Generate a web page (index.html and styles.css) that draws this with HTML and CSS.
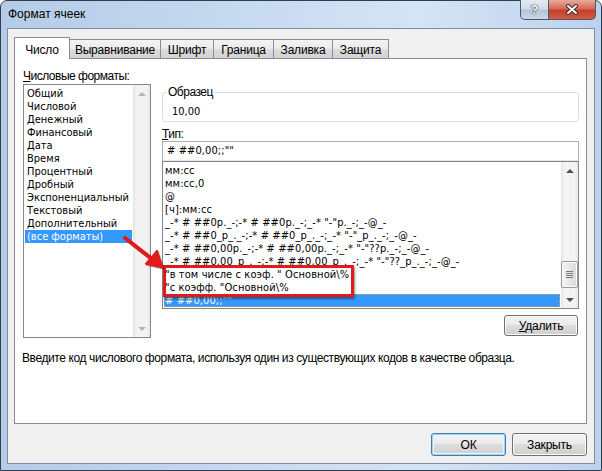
FILE: index.html
```html
<!DOCTYPE html>
<html lang="ru">
<head>
    <meta charset="UTF-8">
    <title>Формат ячеек</title>
    <link rel="stylesheet" href="styles.css">
</head>
<body>
    <div class="window">
        <div class="titlebar">
            <span class="title">Формат ячеек</span>
            <div class="caption-btns">
                <div class="cap-help">?</div>
                <div class="cap-close">
                    <svg width="14" height="11" viewBox="0 0 14 11">
                        <path d="M3 2 L11 9 M11 2 L3 9" stroke="#3b2b2b" stroke-width="4" stroke-linecap="round"/>
                        <path d="M3 2 L11 9 M11 2 L3 9" stroke="#fff" stroke-width="2" stroke-linecap="round"/>
                    </svg>
                </div>
            </div>
        </div>

        <div class="client">
            <div class="tabs">
                <div class="tab active w1">Число</div>
                <div class="tab w2">Выравнивание</div>
                <div class="tab w3">Шрифт</div>
                <div class="tab w4">Граница</div>
                <div class="tab w5">Заливка</div>
                <div class="tab w6">Защита</div>
            </div>

            <div class="panel">
                <div class="panel-main">
                    <div class="col-left">
                        <div class="label"><u>Ч</u>исловые форматы:</div>
                        <div class="listbox cat-list">
                            <ul class="items">
                                <li>Общий</li>
                                <li>Числовой</li>
                                <li>Денежный</li>
                                <li>Финансовый</li>
                                <li>Дата</li>
                                <li>Время</li>
                                <li>Процентный</li>
                                <li>Дробный</li>
                                <li>Экспоненциальный</li>
                                <li>Текстовый</li>
                                <li>Дополнительный</li>
                                <li class="selected">(все форматы)</li>
                            </ul>
                            <div class="vscroll disabled">
                                <div class="sb-btn"><span class="arr-up"></span></div>
                                <div class="sb-track"></div>
                                <div class="sb-btn"><span class="arr-down"></span></div>
                            </div>
                        </div>
                    </div>

                    <div class="col-right">
                        <fieldset class="sample">
                            <legend>Образец</legend>
                            <div class="sample-val">10,00</div>
                        </fieldset>

                        <div class="label type-label"><u>Т</u>ип:</div>
                        <div class="textbox"># ##0,00;;""</div>

                        <div class="listbox type-list">
                            <ul class="items">
                                <li>мм:сс</li>
                                <li>мм:сс,0</li>
                                <li>@</li>
                                <li>[ч]:мм:сс</li>
                                <li>_-* # ##0р._-;-* # ##0р._-;_-* "-"р._-;_-@_-</li>
                                <li>_-* # ##0_р_._-;-* # ##0_р_._-;_-* "-"_р_._-;_-@_-</li>
                                <li>_-* # ##0,00р._-;-* # ##0,00р._-;_-* "-"??р._-;_-@_-</li>
                                <li>_-* # ##0,00_р_._-;-* # ##0,00_р_._-;_-* "-"??_р_._-;_-@_-</li>
                                <li>"в том числе с коэф. " Основной\%</li>
                                <li>"с коэфф. "Основной\%</li>
                                <li class="selected focus"># ##0,00;;""</li>
                            </ul>
                            <div class="vscroll">
                                <div class="sb-btn"><span class="arr-up"></span></div>
                                <div class="sb-track">
                                    <div class="sb-thumb"><span></span><span></span><span></span><span></span></div>
                                </div>
                                <div class="sb-btn"><span class="arr-down"></span></div>
                            </div>
                        </div>

                        <div class="row-right">
                            <button class="btn"><u>У</u>далить</button>
                        </div>
                    </div>
                </div>

                <p class="hint">Введите код числового формата, используя один из существующих кодов в качестве образца.</p>
            </div>

            <div class="dlg-buttons">
                <button class="btn btn-default">ОК</button>
                <button class="btn">Закрыть</button>
            </div>
        </div>
    </div>

    <!-- пометки поверх скриншота -->
    <div class="overlay">
        <div class="callout"></div>
        <svg class="arrow" width="602" height="471" viewBox="0 0 602 471">
            <g transform="translate(1.2 1.2)" fill="rgba(60,0,0,0.35)" stroke="rgba(60,0,0,0.35)">
                <line x1="125" y1="238" x2="152" y2="259" stroke-width="4"/>
                <polygon points="163,268 145,264 157,250"/>
            </g>
            <g fill="#e3191b" stroke="#e3191b">
                <line x1="125" y1="238" x2="152" y2="259" stroke-width="4" stroke-linecap="round"/>
                <polygon points="163,268 145,264 157,250"/>
            </g>
        </svg>
    </div>
</body>
</html>
```

FILE: styles.css
```css
* {
    margin: 0;
    padding: 0;
    box-sizing: border-box;
}

body {
    width: 602px;
    height: 471px;
    overflow: hidden;
    font-family: "Liberation Sans", Arial, sans-serif;
    font-size: 12px;
    color: #000;
    background: #fff;
}

/* Окно */
.window {
    width: 602px;
    height: 471px;
    display: flex;
    flex-direction: column;
    border: 1px solid #2f3d4f;
    border-radius: 7px 7px 0 0;
    background: linear-gradient(to right, #b4cce8 0%, #c6daf0 40%, #d5e4f5 70%, #bcd2ec 100%);
    padding: 0 6px 6px;
}

.titlebar {
    height: 27px;
    display: flex;
    align-items: flex-start;
}

.title {
    line-height: 27px;
    padding-left: 1px;
}

.caption-btns {
    margin-left: auto;
    margin-right: -1px;
    margin-top: -1px;
    display: flex;
}

.cap-help,
.cap-close {
    height: 20px;
    border: 1px solid #4b5a6e;
    border-top: none;
    display: flex;
    align-items: center;
    justify-content: center;
}

.cap-help {
    width: 28px;
    border-right: none;
    border-radius: 0 0 0 5px;
    background: linear-gradient(#e3ebf4 0%, #cfdbe8 48%, #b3c4d8 52%, #c9d8e9 100%);
    color: #fff;
    font-weight: bold;
    font-size: 13px;
    text-shadow: 0 0 1px #2d3846, 0 0 1px #2d3846, 0 0 1px #2d3846;
}

.cap-close {
    width: 48px;
    border-radius: 0 0 5px 0;
    background: linear-gradient(#e9aa9d 0%, #d76a55 45%, #c3402a 55%, #d65a41 100%);
}

.client {
    flex: 1;
    background: #f0f0f0;
    border: 1px solid #7d8da2;
    padding: 8px 7px 0 6px;
    display: flex;
    flex-direction: column;
    letter-spacing: -0.5px;
}

/* Вкладки */
.tabs {
    display: flex;
    height: 21px;
    align-items: flex-start;
    letter-spacing: -0.2px;
}

.tab {
    height: 19px;
    margin-top: 2px;
    margin-left: -1px;
    padding-top: 3px;
    line-height: 14px;
    text-align: center;
    border: 1px solid #898c95;
    border-bottom: none;
    background: linear-gradient(#f3f3f3 0%, #ebebeb 50%, #dddddd 50%, #d2d2d2 100%);
}

.tab.active {
    position: relative;
    z-index: 1;
    height: 22px;
    margin-top: 0;
    padding-top: 5px;
    background: #fff;
}

.w1 { width: 56px; margin-left: 0; }
.w2 { width: 92px; }
.w3 { width: 54px; }
.w4 { width: 61px; }
.w5 { width: 60px; }
.w6 { width: 57px; }

.panel {
    height: 366px;
    background: #fff;
    border: 1px solid #898c95;
    padding: 10px 7px 0 8px;
}

.panel-main {
    display: flex;
    gap: 11px;
}

.label {
    line-height: 14px;
    margin-bottom: 1px;
}

.col-left {
    width: 128px;
}

.col-right {
    width: 417px;
    padding-top: 16px;
}

/* Списки */
.listbox {
    border: 1px solid #828790;
    background: #fff;
    display: flex;
    overflow: hidden;
}

.cat-list {
    height: 254px;
}

.type-list {
    height: 148px;
}

.items {
    list-style: none;
    flex: 1;
    padding: 2px 1px 1px;
    overflow: hidden;
    font-family: "DejaVu Sans Condensed", "DejaVu Sans", sans-serif;
    font-stretch: condensed;
    font-size: 11px;
    letter-spacing: 0;
}

.type-list .items {
    letter-spacing: 0.1px;
}

.items li {
    line-height: 13px;
    height: 13px;
    padding-left: 2px;
    white-space: nowrap;
}

.type-list .items li {
    padding-left: 1px;
}

.items li.selected {
    background: #3399ff;
    color: #fff;
}

.items li.focus {
    outline: 1px dotted #c8a060;
    outline-offset: -1px;
}

.vscroll {
    width: 17px;
    display: flex;
    flex-direction: column;
    background: linear-gradient(to right, #e4e4e4 0%, #f3f3f3 20%, #f3f3f3 80%, #e6e6e6 100%);
}

.sb-btn {
    height: 17px;
    display: flex;
    align-items: center;
    justify-content: center;
}

.sb-track {
    flex: 1;
    position: relative;
}

.arr-up,
.arr-down {
    width: 0;
    height: 0;
    border-left: 4px solid transparent;
    border-right: 4px solid transparent;
}

.arr-up {
    border-bottom: 4px solid #4f4f4f;
}

.arr-down {
    border-top: 4px solid #4f4f4f;
}

.vscroll.disabled .arr-up {
    border-bottom-color: #b4b4b4;
}

.vscroll.disabled .arr-down {
    border-top-color: #b4b4b4;
}

.sb-thumb {
    position: absolute;
    left: 0;
    right: 0;
    bottom: 3px;
    height: 27px;
    border: 1px solid #979797;
    border-radius: 2px;
    background: linear-gradient(to right, #f4f4f4 0%, #e8e8e8 50%, #d9d9d9 100%);
    box-shadow: inset 0 0 0 1px #fbfbfb;
    display: flex;
    flex-direction: column;
    align-items: center;
    justify-content: center;
    gap: 1px;
}

.sb-thumb span {
    width: 7px;
    height: 1px;
    background: #7a7a7a;
}

/* Образец */
.sample {
    border: 1px solid #d5dfe5;
    border-radius: 3px;
    padding: 0 8px 2px 9px;
}

.sample legend {
    line-height: 14px;
    padding: 0 1px;
    margin-left: -5px;
}

.sample-val {
    padding-top: 6px;
    line-height: 14px;
    font-family: "DejaVu Sans Condensed", "DejaVu Sans", sans-serif;
    font-stretch: condensed;
    font-size: 11px;
    letter-spacing: 0;
}

.type-label {
    margin-top: 5px;
    margin-bottom: 0;
}

.textbox {
    height: 20px;
    border: 1px solid #abadb3;
    border-bottom-color: #e3e9ef;
    padding-left: 4px;
    line-height: 18px;
    background: #fff;
    font-family: "DejaVu Sans Condensed", "DejaVu Sans", sans-serif;
    font-stretch: condensed;
    font-size: 11px;
    letter-spacing: 0.1px;
}

.row-right {
    display: flex;
    justify-content: flex-end;
    margin-top: 6px;
    padding-right: 1px;
}

.hint {
    margin-top: 13px;
    margin-left: -1px;
    line-height: 14px;
    letter-spacing: -0.4px;
}

/* Кнопки */
.btn {
    font-family: inherit;
    font-size: 12px;
    letter-spacing: -0.2px;
    color: #000;
    width: 74px;
    height: 21px;
    border: 1px solid #707070;
    border-radius: 3px;
    background: linear-gradient(#f2f2f2 0%, #ebebeb 49%, #dddddd 50%, #cfcfcf 100%);
    box-shadow: inset 0 0 0 1px #fbfbfb;
}

.dlg-buttons {
    display: flex;
    justify-content: flex-end;
    gap: 6px;
    margin-top: 9px;
}

.dlg-buttons .btn {
    width: 75px;
    height: 23px;
}

.btn-default {
    border-color: #3c7fb1;
    box-shadow: inset 0 0 0 1px #9fd1f1, inset 0 0 0 2px #eaf5fc;
}

/* Пометки */
.overlay {
    position: absolute;
    left: 0;
    top: 0;
    width: 602px;
    height: 471px;
    pointer-events: none;
}

.callout {
    position: absolute;
    left: 163px;
    top: 265px;
    width: 191px;
    height: 32px;
    border: 3px solid #e3191b;
    box-shadow: 1px 2px 2px rgba(0, 0, 0, 0.45);
}

.arrow {
    position: absolute;
    left: 0;
    top: 0;
}
```
